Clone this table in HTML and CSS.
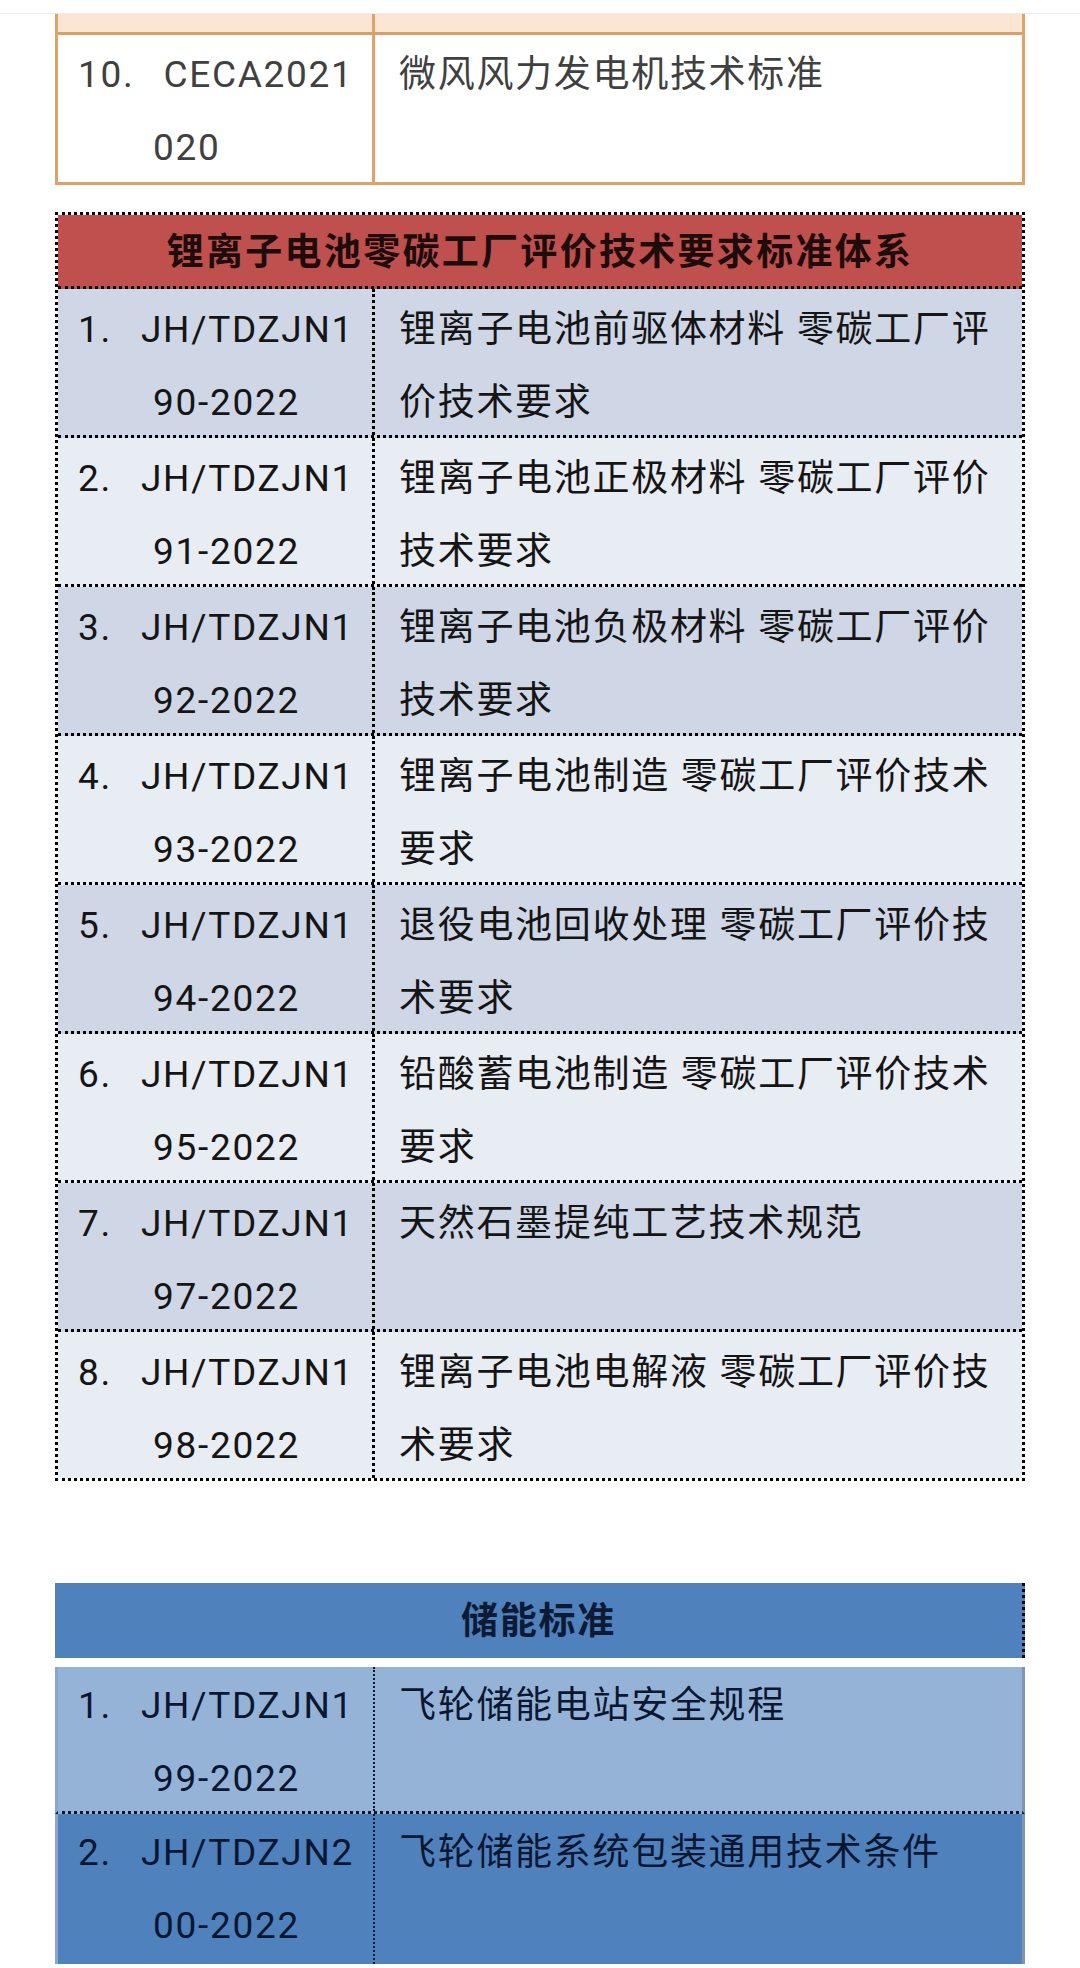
FILE: index.html
```html
<!DOCTYPE html>
<html lang="zh-CN">
<head>
<meta charset="utf-8">
<title>标准体系</title>
<link rel="stylesheet" href="styles.css">
</head>
<body>
<div class="topline"></div>
<div class="page">
  <div class="tbl tbl-orange">
    <div class="row row-peach">
      <div class="c1"></div>
      <div class="c2"></div>
    </div>
    <div class="row row-white">
      <div class="c1"><div class="l1"><span class="num">10.</span>CECA2021</div><div class="l2">020</div></div>
      <div class="c2">微风风力发电机技术标准</div>
    </div>
  </div>

  <div class="tbl tbl-red">
    <div class="head">锂离子电池零碳工厂评价技术要求标准体系</div>
    <div class="row odd">
      <div class="c1"><div class="l1"><span class="num">1.</span>JH/TDZJN1</div><div class="l2">90-2022</div></div>
      <div class="c2">锂离子电池前驱体材料 零碳工厂评<br>价技术要求</div>
    </div>
    <div class="row even">
      <div class="c1"><div class="l1"><span class="num">2.</span>JH/TDZJN1</div><div class="l2">91-2022</div></div>
      <div class="c2">锂离子电池正极材料 零碳工厂评价<br>技术要求</div>
    </div>
    <div class="row odd">
      <div class="c1"><div class="l1"><span class="num">3.</span>JH/TDZJN1</div><div class="l2">92-2022</div></div>
      <div class="c2">锂离子电池负极材料 零碳工厂评价<br>技术要求</div>
    </div>
    <div class="row even">
      <div class="c1"><div class="l1"><span class="num">4.</span>JH/TDZJN1</div><div class="l2">93-2022</div></div>
      <div class="c2">锂离子电池制造 零碳工厂评价技术<br>要求</div>
    </div>
    <div class="row odd">
      <div class="c1"><div class="l1"><span class="num">5.</span>JH/TDZJN1</div><div class="l2">94-2022</div></div>
      <div class="c2">退役电池回收处理 零碳工厂评价技<br>术要求</div>
    </div>
    <div class="row even">
      <div class="c1"><div class="l1"><span class="num">6.</span>JH/TDZJN1</div><div class="l2">95-2022</div></div>
      <div class="c2">铅酸蓄电池制造 零碳工厂评价技术<br>要求</div>
    </div>
    <div class="row odd">
      <div class="c1"><div class="l1"><span class="num">7.</span>JH/TDZJN1</div><div class="l2">97-2022</div></div>
      <div class="c2">天然石墨提纯工艺技术规范</div>
    </div>
    <div class="row even">
      <div class="c1"><div class="l1"><span class="num">8.</span>JH/TDZJN1</div><div class="l2">98-2022</div></div>
      <div class="c2">锂离子电池电解液 零碳工厂评价技<br>术要求</div>
    </div>
  </div>

  <div class="tbl tbl-blue">
    <div class="head">储能标准</div>
    <div class="row b-light">
      <div class="c1"><div class="l1"><span class="num">1.</span>JH/TDZJN1</div><div class="l2">99-2022</div></div>
      <div class="c2">飞轮储能电站安全规程</div>
    </div>
    <div class="row b-dark">
      <div class="c1"><div class="l1"><span class="num">2.</span>JH/TDZJN2</div><div class="l2">00-2022</div></div>
      <div class="c2">飞轮储能系统包装通用技术条件</div>
    </div>
  </div>
</div>
</body>
</html>
```
FILE: styles.css
```css
html, body {
  margin: 0;
  padding: 0;
  background: #ffffff;
}
body {
  width: 1080px;
  height: 1968px;
  overflow: hidden;
  font-family: Roboto, "Noto Sans CJK SC", sans-serif;
  font-size: 37px;
  letter-spacing: 1.7px;
}
.topline {
  height: 14px;
  border-bottom: 1px solid #ececec;
  box-sizing: border-box;
}
.page {
  padding: 0 55px;
}
.tbl {
  width: 970px;
  box-sizing: border-box;
}
.row {
  display: flex;
  overflow: hidden;
}
.c1 {
  width: 320px;
  flex: none;
  box-sizing: border-box;
  padding-top: 4px;
  line-height: 73px;
}
.c2 {
  flex: 1;
  padding-left: 24px;
  padding-top: 4px;
  line-height: 73px;
}
.l1 {
  padding-left: 20px;
  white-space: nowrap;
}
.l2 {
  padding-left: 95px;
}
.num {
  margin-right: 29px;
}

/* orange section */
.tbl-orange {
  border-left: 3px solid #dea467;
  border-right: 3px solid #dea467;
  border-bottom: 3px solid #dea467;
  color: #404040;
}
.tbl-orange .c1 {
  width: 317px;
  border-right: 3px solid #dea467;
}
.tbl-orange .c1, .tbl-orange .c2 {
  padding-top: 3px;
}
.row-peach {
  height: 18px;
  background: #fbe5d5;
  border-bottom: 3px solid #d9a066;
}
.row-peach .c1, .row-peach .c2 {
  padding: 0;
}
.row-white {
  height: 147px;
  background: #ffffff;
}

/* red section */
.tbl-red {
  margin-top: 27px;
  border: 3px dotted #000;
  color: #151515;
}
.tbl-red .c1 {
  width: 317px;
  border-right: 3px dotted #000;
}
.tbl-red .head {
  height: 74px;
  line-height: 67px;
  padding-top: 4px;
  box-sizing: border-box;
  background: #c0504d;
  border-bottom: 3px dotted #000;
  text-align: center;
  font-weight: bold;
  letter-spacing: 2.3px;
  color: #1e0b0b;
}
.tbl-red .row {
  height: 146px;
  border-bottom: 3px dotted #000;
}
.tbl-red .row:last-child {
  border-bottom: none;
}
.odd {
  background: #cfd6e6;
}
.even {
  background: #e8ecf3;
}

/* blue section */
.tbl-blue {
  margin-top: 102px;
  color: #0b1631;
}
.tbl-blue .head {
  height: 73px;
  line-height: 73px;
  padding-top: 2px;
  background: #4f81bd;
  border-right: 3px dotted #000;
  text-align: center;
  font-weight: bold;
  color: #0d1a33;
}
.tbl-blue .row {
  border-right: 3px solid #7f95b0;
  border-left: 3px solid #8aa6cc;
}
.tbl-blue .c1 {
  width: 317px;
  border-right: 2px dotted #0b1631;
}
.tbl-blue .c1, .tbl-blue .c2 {
  padding-top: 2px;
}
.b-light {
  margin-top: 9px;
  height: 144px;
  background: #95b3d7;
  border-bottom: 3px dotted #0b1631;
}
.b-dark {
  height: 150px;
  background: #4f81bd;
}
```
